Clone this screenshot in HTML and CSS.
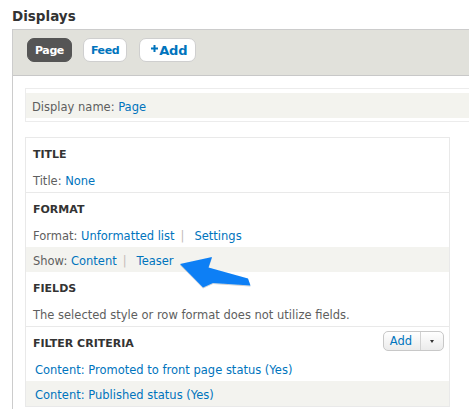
FILE: index.html
```html
<!DOCTYPE html>
<html>
<head>
<meta charset="utf-8">
<link rel="stylesheet" href="styles.css">
</head>
<body>
<h2 class="page-title">Displays</h2>
<div class="displays">
  <div class="tabs-bar">
    <a class="tab active">Page</a>
    <a class="tab">Feed</a>
    <a class="tab tab-add"><svg class="plus" width="7" height="7" viewBox="0 0 7 7"><rect x="2.5" y="0" width="2" height="7" fill="#0074bd"/><rect x="0" y="2.5" width="7" height="2" fill="#0074bd"/></svg>Add</a>
  </div>
  <div class="display-body">
    <div class="display-name"><div class="inner"><span class="label">Display name:</span> <a>Page</a></div></div>
    <div class="column">
      <div class="section">
        <h3 class="sec-title">Title</h3>
        <div class="row"><span class="label">Title:</span> <a>None</a></div>
      </div>
      <div class="section bordered">
        <h3 class="sec-title">Format</h3>
        <div class="row"><span class="label">Format:</span> <a>Unformatted list</a><span class="sep">|</span><a>Settings</a></div>
        <div class="row alt"><span class="label">Show:</span> <a>Content</a><span class="sep">|</span><a>Teaser</a></div>
      </div>
      <div class="section">
        <h3 class="sec-title">Fields</h3>
        <div class="row"><span class="label">The selected style or row format does not utilize fields.</span></div>
      </div>
      <div class="section bordered">
        <h3 class="sec-title with-btn">Filter criteria
          <span class="drop-btn"><span class="btn-main">Add</span><span class="btn-toggle"><span class="caret"></span></span></span>
        </h3>
        <div class="row filter"><a>Content: Promoted to front page status (Yes)</a></div>
        <div class="row filter alt"><a>Content: Published status (Yes)</a></div>
      </div>
    </div>
  </div>
</div>
<svg class="arrow" width="469" height="409" viewBox="0 0 469 409">
  <defs>
    <filter id="sh" x="-20%" y="-20%" width="140%" height="140%">
      <feDropShadow dx="0" dy="1" stdDeviation="0.6" flood-color="#000" flood-opacity="0.2"/>
    </filter>
  </defs>
  <polygon filter="url(#sh)" fill="#0a7ff5" points="180,264 212,257 208.5,267.5 248,278.5 250.5,285.5 213,283 203,287.5"/>
</svg>
</body>
</html>
```
FILE: styles.css
```css
html, body {
  margin: 0;
  padding: 0;
  overflow: hidden;
}
body {
  font-family: "DejaVu Sans", "Liberation Sans", sans-serif;
  font-size: 11.5px;
  color: #333;
  background: #fff;
  position: relative;
  width: 469px;
  height: 409px;
}
a {
  color: #0074bd;
  text-decoration: none;
}
.page-title {
  margin: 0 0 4px;
  padding: 7px 0 0 12px;
  font-size: 13.5px;
  line-height: 18px;
  font-weight: bold;
  color: #333;
}
.displays {
  margin-left: 12px;
  border-left: 1px solid #ccc;
  width: 500px;
  min-height: 400px;
}
.tabs-bar {
  background: #e1e1db;
  border-top: 1px solid #ccc;
  border-bottom: 1px solid #c8c8c8;
  height: 37px;
  padding: 8px 0 0 14px;
  display: flex;
  align-items: flex-start;
  gap: 11px;
}
.tab {
  box-sizing: border-box;
  height: 24px;
  display: flex;
  align-items: center;
  padding: 0 7px;
  border: 1px solid #cfcfcf;
  border-radius: 7px;
  background: #fff;
  color: #0074bd;
  font-weight: bold;
  font-size: 11px;
  letter-spacing: -0.4px;
}
.tab.active {
  background: #555;
  border-color: #555;
  color: #fff;
}
.tab-add {
  font-size: 13px;
  letter-spacing: -0.2px;
  padding: 0 8px 0 11px;
  margin-left: 1px;
}
.plus {
  margin-top: -3px;
  margin-right: 1px;
}
.display-body {
  padding: 12px 0 0 12px;
}
.display-name {
  border: 1px solid #ececec;
  border-right: none;
  padding: 4px 0 3px;
}
.display-name .inner {
  background: #f3f3ee;
  padding: 5px 6px 2px;
  line-height: 18px;
}
.label {
  color: #5e5e5e;
}
.column {
  margin-top: 15px;
  width: 425px;
  box-sizing: border-box;
  border: 1px solid #e9e9e9;
}
.section.bordered {
  border-top: 1px solid #e9e9e9;
}
.sec-title {
  margin: 0;
  padding: 8px 7px 3px;
  font-size: 11px;
  line-height: 18px;
  font-weight: bold;
  text-transform: uppercase;
  color: #333;
}
.sec-title.with-btn {
  display: flex;
  justify-content: space-between;
  align-items: flex-start;
  padding-right: 5px;
}
.row {
  padding: 5px 7px 2px;
  line-height: 18px;
}
.row.alt {
  background: #f3f3ef;
}
.row.filter {
  padding-left: 9px;
}
.sep {
  color: #c4bcb8;
  margin: 0 10px 0 6px;
}
.drop-btn {
  box-sizing: border-box;
  height: 20px;
  margin: -4px 0 -2px;
  display: flex;
  border: 1px solid #c8c8c8;
  border-radius: 5px;
  background: linear-gradient(#ffffff, #ebebeb);
  text-transform: none;
  font-weight: normal;
}
.btn-main {
  padding: 0 8px 0 6px;
  color: #0074bd;
  font-size: 11.5px;
  line-height: 18px;
}
.btn-toggle {
  width: 22px;
  border-left: 1px solid #d2d2d2;
  display: flex;
  align-items: center;
  justify-content: center;
}
.caret {
  width: 0;
  height: 0;
  border-top: 3px solid #333;
  border-left: 2.5px solid transparent;
  border-right: 2.5px solid transparent;
}
.arrow {
  position: absolute;
  left: 0;
  top: 0;
  pointer-events: none;
}
```
